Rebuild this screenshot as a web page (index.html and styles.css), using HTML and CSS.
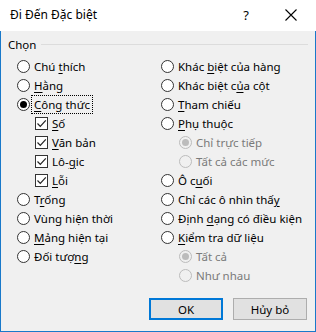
FILE: index.html
```html
<!DOCTYPE html>
<html lang="vi">
<head>
    <meta charset="UTF-8">
    <meta name="viewport" content="width=device-width, initial-scale=1.0">
    <title>Đi Đến Đặc biệt</title>
    <link rel="stylesheet" href="styles.css">
</head>
<body>
    <div class="dialog">
        <div class="titlebar">
            <span class="title">Đi Đến Đặc biệt</span>
            <span class="help">?</span>
            <svg class="close" width="12" height="12" viewBox="0 0 12 12">
                <path d="M0.5 0.5 L11.5 11.5 M11.5 0.5 L0.5 11.5" stroke="#000" stroke-width="1.1" fill="none"/>
            </svg>
        </div>
        <div class="content">
            <div class="legend">
                <span>Chọn</span>
                <div class="legend-line"></div>
            </div>
            <div class="options">
                <!-- left column -->
                <div class="col col-left">
                    <div class="opt"><span class="radio"></span><span>Chú <u>t</u>hích</span></div>
                    <div class="opt"><span class="radio"></span><span><u>H</u>ằng</span></div>
                    <div class="opt"><span class="radio checked"></span><span class="focus"><u>C</u>ông thức</span></div>
                    <div class="opt sub"><span class="check"><svg width="11" height="11" viewBox="0 0 11 11"><path d="M1.5 5.5 L4.3 8.3 L9.8 2.3" stroke="#222" stroke-width="1.2" fill="none"/></svg></span><span><u>S</u>ố</span></div>
                    <div class="opt sub"><span class="check"><svg width="11" height="11" viewBox="0 0 11 11"><path d="M1.5 5.5 L4.3 8.3 L9.8 2.3" stroke="#222" stroke-width="1.2" fill="none"/></svg></span><span><u>V</u>ăn bản</span></div>
                    <div class="opt sub"><span class="check"><svg width="11" height="11" viewBox="0 0 11 11"><path d="M1.5 5.5 L4.3 8.3 L9.8 2.3" stroke="#222" stroke-width="1.2" fill="none"/></svg></span><span>Lô-<u>g</u>ic</span></div>
                    <div class="opt sub"><span class="check"><svg width="11" height="11" viewBox="0 0 11 11"><path d="M1.5 5.5 L4.3 8.3 L9.8 2.3" stroke="#222" stroke-width="1.2" fill="none"/></svg></span><span><u>L</u>ỗi</span></div>
                    <div class="opt"><span class="radio"></span><span>T<u>r</u>ống</span></div>
                    <div class="opt"><span class="radio"></span><span>Vùng hiện thời</span></div>
                    <div class="opt"><span class="radio"></span><span><u>M</u>ảng hiện tại</span></div>
                    <div class="opt"><span class="radio"></span><span>Đối tượ<u>n</u>g</span></div>
                </div>
                <!-- right column -->
                <div class="col col-right">
                    <div class="opt"><span class="radio"></span><span>Khác <u>b</u>iệt của hàng</span></div>
                    <div class="opt"><span class="radio"></span><span>Khác biệt c<u>ủ</u>a cột</span></div>
                    <div class="opt"><span class="radio"></span><span><u>T</u>ham chiếu</span></div>
                    <div class="opt"><span class="radio"></span><span><u>P</u>hụ thuộc</span></div>
                    <div class="opt sub disabled"><span class="radio checked"></span><span>Chỉ trực tiếp</span></div>
                    <div class="opt sub disabled"><span class="radio"></span><span>Tất cả các mức</span></div>
                    <div class="opt"><span class="radio"></span><span>Ô c<u>u</u>ối</span></div>
                    <div class="opt"><span class="radio"></span><span>Chỉ các ô nhìn thấ<u>y</u></span></div>
                    <div class="opt"><span class="radio"></span><span>Định <u>d</u>ạng có điều kiện</span></div>
                    <div class="opt"><span class="radio"></span><span><u>K</u>iểm tra dữ liệu</span></div>
                    <div class="opt sub disabled"><span class="radio checked"></span><span>Tất cả</span></div>
                    <div class="opt sub disabled"><span class="radio"></span><span>Như nhau</span></div>
                </div>
            </div>
            <div class="buttons">
                <button class="btn btn-default">OK</button>
                <button class="btn">Hủy bỏ</button>
            </div>
        </div>
    </div>
</body>
</html>
```

FILE: styles.css
```css
body {
    margin: 0;
    font-family: 'Noto Sans', 'Liberation Sans', sans-serif;
    font-size: 11.5px;
    color: #000;
    background: #fff;
}
.dialog {
    width: 316px;
    height: 332px;
    display: flex;
    flex-direction: column;
}
.titlebar {
    height: 31px;
    background: #fff;
    display: flex;
    align-items: center;
    padding: 0 0 0 10px;
    box-sizing: border-box;
}
.title {
    font-size: 12px;
    flex: 1;
    margin-top: -2px;
}
.help {
    font-size: 13px;
    margin-right: 36px;
    margin-top: -2px;
}
.close {
    margin-right: 19px;
    margin-top: -2px;
}
.content {
    flex: 1;
    background: #f0f0f0;
    border: 1px solid #1979ca;
    border-top: none;
    display: flex;
    flex-direction: column;
}
.legend {
    display: flex;
    align-items: center;
    height: 16px;
    margin-top: 5px;
    padding: 0 7px 0 7px;
}
.legend-line {
    flex: 1;
    height: 1px;
    background: #dcdcdc;
    margin-left: 5px;
}
.options {
    display: flex;
    margin-top: 5px;
}
.col {
    display: flex;
    flex-direction: column;
}
.col-left {
    width: 144px;
    padding-left: 16px;
}
.opt {
    height: 19px;
    display: flex;
    align-items: center;
    gap: 4px;
    white-space: nowrap;
}
.opt.sub {
    padding-left: 18px;
}
.col-left .opt.sub {
    padding-left: 18px;
}
.opt u {
    text-underline-offset: 2px;
}
.radio {
    width: 13px;
    height: 13px;
    box-sizing: border-box;
    border: 1px solid #333;
    border-radius: 50%;
    background: #fff;
    display: flex;
    align-items: center;
    justify-content: center;
    flex: none;
}
.radio.checked::after {
    content: "";
    width: 7px;
    height: 7px;
    border-radius: 50%;
    background: #000;
}
.check {
    width: 13px;
    height: 13px;
    box-sizing: border-box;
    border: 1px solid #333;
    background: #fff;
    display: flex;
    align-items: center;
    justify-content: center;
    flex: none;
}
.focus {
    outline: 1px dotted #000;
    outline-offset: 1px;
    padding: 0 1px;
    margin-left: -1px;
}
.disabled {
    color: #7a7a7a;
}
.disabled .radio {
    border-color: #bcbcbc;
    background: #f0f0f0;
}
.disabled .radio.checked::after {
    background: #bcbcbc;
}
.buttons {
    display: flex;
    justify-content: flex-end;
    gap: 10px;
    padding: 13px 8px 0 0;
}
.btn {
    width: 74px;
    height: 22px;
    background: #e1e1e1;
    border: 1px solid #adadad;
    font-family: 'Noto Sans', 'Liberation Sans', sans-serif;
    font-size: 11.5px;
    color: #000;
    padding: 0;
}
.btn-default {
    border: 2px solid #0078d7;
}
```
